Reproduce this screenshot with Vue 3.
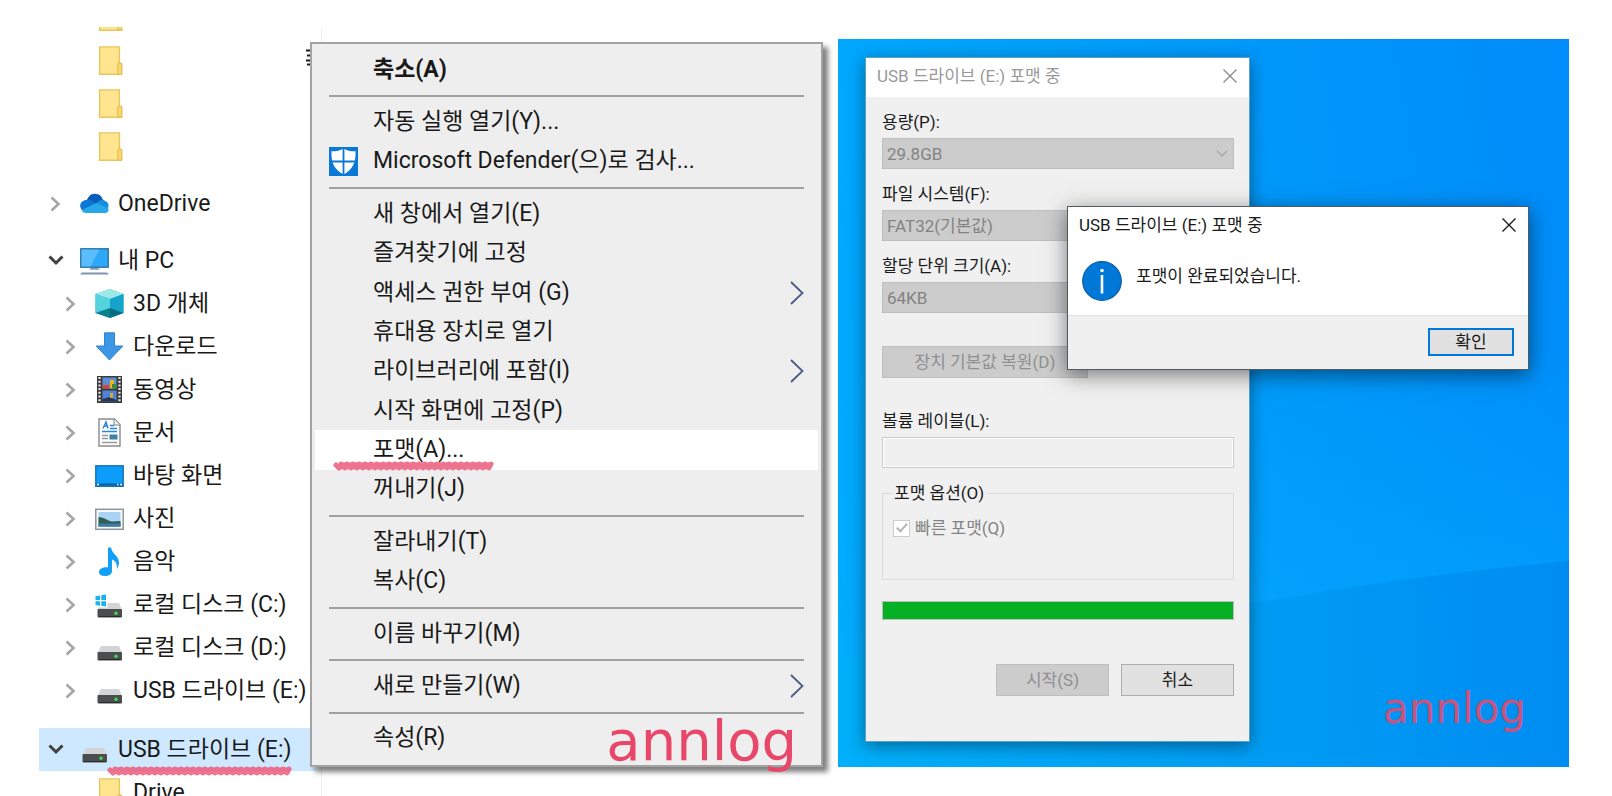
<template>
  <div class="page">
    <!-- 탐색기 -->
    <section class="explorer">
      <nav class="tree">
        <ul class="tree-list">
          <li
            v-for="node in nodes"
            :key="node.id"
            class="tree-row"
            :class="[`level-${node.level}`, { clipped: node.clipped, spaced: node.spaced, selected: node.selected }]"
          >
            <button v-if="node.arrow" class="toggle" :class="node.arrow" :aria-label="node.label">
              <svg v-if="node.arrow === 'open'" width="16" height="11" viewBox="0 0 16 11">
                <path d="M1.5 1.5 8 8l6.5-6.5" fill="none" stroke="#404040" stroke-width="3" />
              </svg>
              <svg v-else width="11" height="16" viewBox="0 0 11 16">
                <path d="M1.5 1.5 8.5 8l-7 6.5" fill="none" stroke="#a6a6a6" stroke-width="2.6" />
              </svg>
            </button>
            <span v-else class="toggle"></span>

            <svg class="node-icon" width="29" height="29" viewBox="0 0 29 29">
              <template v-if="node.icon === 'folder'">
                <path d="M4.600.9h19.800v16.500l1.900.8v10H4.600z" fill="#ffe58f" stroke="#e8c65c" stroke-width="1.4" />
                <path d="M22.900 28V17.800l2-1.200 1.900 1.200V28z" fill="#fbd970" stroke="#e3bd4e" stroke-width="1.2" />
              </template>
              <template v-else-if="node.icon === 'cloud'">
                <path d="M6 15C7 7 12 4 16 5c4 0 6 3 7 6l-8 5z" fill="#0a5cb8" />
                <path d="M6 11c4-1 7 1 10 4L3 22c-5-4-3-10 3-11z" fill="#0d78d4" />
                <path d="M16 15c3-5 8-5 9-3 4 1 4 5 3 7l-9 2z" fill="#1490df" />
                <path d="M2 21 16 14l12 5c2 4-2 5-4 5H6c-2 0-4-1-4-3z" fill="#28a8ea" />
              </template>
              <template v-else-if="node.icon === 'pc'">
                <rect x=".8" y="2.8" width="27.4" height="18.4" fill="#2fa8fa" stroke="#2f6f9f" stroke-width="1.4" />
                <path d="M1.500 3.500h18l-9 17h-9z" fill="#6cc6ff" opacity=".7" />
                <path d="M11 22h7l2 1.800H9z" fill="#7f9bb4" />
                <path d="M2 26.500h25l2 2H0z" fill="#8094ab" />
              </template>
              <template v-else-if="node.icon === 'cube'">
                <path d="M.5 5 15 0l13.500 5v19L15 29 .5 24z" fill="#28b9d4" />
                <path d="M.5 5 15 0l13.500 5L15 10z" fill="#9ce9ea" />
                <path d="M.5 5 15 10v9L.5 24z" fill="#55d3dc" />
                <path d="M15 10 28.500 5v19L15 19z" fill="#16a3cb" />
                <path d="M.5 24 15 19v10z" fill="#0b8289" />
                <path d="M15 19l13.500 5L15 29z" fill="#086b80" />
              </template>
              <path
                v-else-if="node.icon === 'download'"
                d="M9.500.8h10V14h8.300L14.500 28 1.200 14h8.300z"
                fill="#3e97e6"
                stroke="#2f83d2"
              />
              <template v-else-if="node.icon === 'video'">
                <rect x="2" y="1" width="25" height="27" fill="#3a3a3a" />
                <path d="M4.500 2v26M24.500 2v26" stroke="#e8e8e8" stroke-width="2.200" stroke-dasharray="2 1.700" />
                <rect x="7.500" y="2.500" width="14" height="11" fill="#5b8fd8" />
                <rect x="7.500" y="15.500" width="14" height="11" fill="#4f83d6" />
                <path d="M7.500 10h7v3.500h-7z" fill="#d6453c" />
                <path d="M15 5h4v8.500h-4z" fill="#e9b521" />
                <path d="M17 9h4.500v4.500H17z" fill="#3c8b34" />
                <path d="M7.500 24l7-2 7 3v1.500h-14z" fill="#24385c" />
                <path d="M15 18h3v5h-3z" fill="#d9a73a" />
              </template>
              <template v-else-if="node.icon === 'doc'">
                <path d="M4 1h15.500l5.500 5.500V28H4z" fill="#fdfdfd" stroke="#8a8a8a" stroke-width="1.400" />
                <path d="M19 1v6h6" fill="#eee" stroke="#8a8a8a" />
                <path d="M8 10.500 11 4l2 6.500M8.500 8h4M15 7.500h4M15 10.500h7M7 13.500h15" stroke="#2b87d3" stroke-width="1.500" fill="none" />
                <path d="M7 17.500h6M7 20.500h6M7 24.500h15" stroke="#9a9a9a" stroke-width="1.300" />
                <rect x="14.500" y="16.500" width="8" height="5" fill="#3c81ae" />
              </template>
              <template v-else-if="node.icon === 'desktop'">
                <rect x=".8" y="4.800" width="27.400" height="20.500" fill="#0c9dfb" stroke="#1573b8" stroke-width="1.400" />
                <path d="M1.500 23.500h26" stroke="#0b5c9e" stroke-width="2" />
                <path d="M2 23.500h2M22 23.500h1.500M25 23.500h2" stroke="#fff" stroke-width="1.500" />
              </template>
              <template v-else-if="node.icon === 'picture'">
                <rect x=".8" y="5.300" width="27.400" height="20" fill="#fcfcfc" stroke="#8c959b" stroke-width="1.500" />
                <rect x="3.500" y="8" width="22" height="14.500" fill="#a9d3f2" />
                <path d="M3.500 13c6 0 8 4 14 4.500l8-.5v5.500h-22z" fill="#2f5f55" />
                <path d="M3.500 19.500h22v3h-22z" fill="#3e7ca8" />
              </template>
              <path
                v-else-if="node.icon === 'music'"
                d="M13 .5h3c1 7 8 8 8 15 0 3-1 5-2 6.500.4-6-2-8-5-9.500V24c0 3-3 5-7 5s-6-1.500-6-4c0-3 4-5.500 9-4.500z"
                fill="#12a0f6"
              />
              <template v-else>
                <path v-if="node.icon === 'windisk'" d="M.5 6.200 5 5.500V10H.5zM6.300 5.300 11 4.600V10H6.300zM.5 11.200H5v4.500L.5 15zM6.300 11.200H11v5.300l-4.700-.7z" fill="#15b4ee" />
                <path v-if="node.icon === 'windisk'" d="M12.500 13h11.500l3 7H2.500l.8-2.500h9.200z" fill="#d2d4d5" />
                <path v-else d="M6 13h18l3 7H2.500z" fill="#d2d4d5" />
                <rect x="2.500" y="19" width="24.500" height="8.500" rx="1" fill="#4b4d4e" />
                <path d="M4 26.500h21.500" stroke="#2c2c2c" />
                <circle cx="21" cy="23.300" r="1.700" fill="#3ee04a" />
              </template>
            </svg>
            <a v-if="node.label" class="node-label" href="#">{{ node.label }}</a>
          </li>
        </ul>
        <svg class="scribble tree-mark" width="188" height="12" viewBox="0 0 188 12">
          <path :d="scribble(188)" />
        </svg>
      </nav>

      <svg class="ruler" width="6" height="18" viewBox="0 0 6 18">
        <path d="M0 1.500h6M1 6.500h5M0 11.500h6M1 15.500h5" stroke="#1a1a1a" stroke-width="2" />
      </svg>

      <!-- 컨텍스트 메뉴 -->
      <div class="context-menu" role="menu">
        <template v-for="(group, g) in menuGroups" :key="g">
          <div v-if="g > 0" class="menu-separator" role="separator"></div>
          <button
            v-for="item in group"
            :key="item.text"
            class="menu-item"
            :class="{ bold: item.bold, hover: item.hover }"
            role="menuitem"
          >
            <span class="menu-icon">
              <svg v-if="item.shield" width="29" height="29" viewBox="0 0 29 29">
                <rect width="29" height="29" fill="#0a78d7" />
                <path d="M14.500 1.500C11 4 6 4.500 2.500 4.300c-.6 11 2.500 18 12 23.200 9.500-5.200 12.600-12.200 12-23.200C23 4.500 18 4 14.500 1.500z" fill="#fff" />
                <path d="M14.500 1v27M2 14.500h25" stroke="#0a78d7" stroke-width="1.800" />
              </svg>
            </span>
            <span class="menu-text">{{ item.text }}</span>
            <svg v-if="item.sub" width="14" height="24" viewBox="0 0 14 24">
              <path d="M1 1l11.500 11L1 23" fill="none" stroke="#4b5a86" stroke-width="1.800" />
            </svg>
            <svg v-if="item.hover" class="scribble menu-mark" width="163" height="12" viewBox="0 0 163 12">
              <path :d="scribble(163)" />
            </svg>
          </button>
        </template>
        <span class="watermark large">annlog</span>
      </div>
    </section>

    <!-- 바탕 화면 -->
    <section class="desktop">
      <svg class="beam" viewBox="0 0 731 728" preserveAspectRatio="none">
        <defs>
          <linearGradient id="beam-fade" x1="0" y1="0" x2="0" y2="1">
            <stop offset="0" stop-color="#00aaff" stop-opacity="0" />
            <stop offset="1" stop-color="#08acff" stop-opacity=".5" />
          </linearGradient>
          <linearGradient id="floor-fade" x1="0" y1="0" x2="1" y2="0">
            <stop offset="0" stop-color="#00b4f4" stop-opacity=".4" />
            <stop offset=".6" stop-color="#009cee" stop-opacity=".5" />
            <stop offset="1" stop-color="#0088e8" stop-opacity=".5" />
          </linearGradient>
        </defs>
        <path d="M0 340 731 300V522Q560 538 412 565 200 590 0 620z" fill="url(#beam-fade)" />
        <path d="M0 620Q200 590 412 565 560 538 731 522V728H0z" fill="url(#floor-fade)" />
      </svg>

      <form class="window format-window" @submit.prevent>
        <header class="title-bar inactive">
          <span>USB 드라이브 (E:) 포맷 중</span>
          <button type="button" class="close" aria-label="닫기">
            <svg width="14" height="14" viewBox="0 0 14 14"><path d="M.5.5l13 13M13.500.5l-13 13" /></svg>
          </button>
        </header>
        <div class="format-body">
          <div v-for="field in fields" :key="field.id" class="field">
            <label :for="field.id">{{ field.label }}</label>
            <div class="select-wrap">
              <select :id="field.id" disabled>
                <option>{{ field.value }}</option>
              </select>
              <svg class="select-arrow" width="12" height="8" viewBox="0 0 12 8">
                <path d="M1 1l5 5 5-5" fill="none" stroke="#a8a8a8" stroke-width="1.500" />
              </svg>
            </div>
          </div>
          <button type="button" class="btn restore" disabled>장치 기본값 복원(D)</button>
          <div class="field">
            <label for="volume">볼륨 레이블(L):</label>
            <input id="volume" class="volume" type="text" disabled />
          </div>
          <fieldset class="options">
            <legend>포맷 옵션(O)</legend>
            <label class="quick"><input type="checkbox" checked disabled />빠른 포맷(Q)</label>
          </fieldset>
          <progress class="progress" value="100" max="100"></progress>
          <div class="actions">
            <button type="button" class="btn" disabled>시작(S)</button>
            <button type="button" class="btn">취소</button>
          </div>
        </div>
      </form>

      <div class="window message" role="dialog">
        <header class="title-bar">
          <span>USB 드라이브 (E:) 포맷 중</span>
          <button type="button" class="close" aria-label="닫기">
            <svg width="14" height="14" viewBox="0 0 14 14"><path d="M.5.5l13 13M13.500.5l-13 13" /></svg>
          </button>
        </header>
        <div class="message-body">
          <svg width="40" height="40" viewBox="0 0 40 40">
            <circle cx="20" cy="20" r="19.300" fill="#0078d7" stroke="#0a5ca8" stroke-width="1.200" />
            <path d="M20 14v18.500" stroke="#fff" stroke-width="2.600" />
            <circle cx="20" cy="9.500" r="1.800" fill="#fff" />
          </svg>
          <p>포맷이 완료되었습니다.</p>
        </div>
        <footer class="message-footer">
          <button type="button" class="btn primary">확인</button>
        </footer>
      </div>

      <span class="watermark small">annlog</span>
    </section>
  </div>
</template>

<script setup>
// 탐색기 트리
const nodes = [
  { id: 1, level: 1, icon: 'folder', clipped: true },
  { id: 2, level: 1, icon: 'folder' },
  { id: 3, level: 1, icon: 'folder' },
  { id: 4, level: 1, icon: 'folder' },
  { id: 5, level: 0, icon: 'cloud', label: 'OneDrive', arrow: 'closed', spaced: true },
  { id: 6, level: 0, icon: 'pc', label: '내 PC', arrow: 'open', spaced: true },
  { id: 7, level: 1, icon: 'cube', label: '3D 개체', arrow: 'closed' },
  { id: 8, level: 1, icon: 'download', label: '다운로드', arrow: 'closed' },
  { id: 9, level: 1, icon: 'video', label: '동영상', arrow: 'closed' },
  { id: 10, level: 1, icon: 'doc', label: '문서', arrow: 'closed' },
  { id: 11, level: 1, icon: 'desktop', label: '바탕 화면', arrow: 'closed' },
  { id: 12, level: 1, icon: 'picture', label: '사진', arrow: 'closed' },
  { id: 13, level: 1, icon: 'music', label: '음악', arrow: 'closed' },
  { id: 14, level: 1, icon: 'windisk', label: '로컬 디스크 (C:)', arrow: 'closed' },
  { id: 15, level: 1, icon: 'disk', label: '로컬 디스크 (D:)', arrow: 'closed' },
  { id: 16, level: 1, icon: 'disk', label: 'USB 드라이브 (E:)', arrow: 'closed' },
  { id: 17, level: 0, icon: 'disk', label: 'USB 드라이브 (E:)', arrow: 'open', spaced: true, selected: true },
  { id: 18, level: 1, icon: 'folder', label: 'Drive' }
]

// 메뉴 그룹 (그룹 사이에 구분선)
const menuGroups = [
  [{ text: '축소(A)', bold: true }],
  [{ text: '자동 실행 열기(Y)...' }, { text: 'Microsoft Defender(으)로 검사...', shield: true }],
  [
    { text: '새 창에서 열기(E)' },
    { text: '즐겨찾기에 고정' },
    { text: '액세스 권한 부여 (G)', sub: true },
    { text: '휴대용 장치로 열기' },
    { text: '라이브러리에 포함(I)', sub: true },
    { text: '시작 화면에 고정(P)' },
    { text: '포맷(A)...', hover: true },
    { text: '꺼내기(J)' }
  ],
  [{ text: '잘라내기(T)' }, { text: '복사(C)' }],
  [{ text: '이름 바꾸기(M)' }],
  [{ text: '새로 만들기(W)', sub: true }],
  [{ text: '속성(R)' }]
]

const fields = [
  { id: 'capacity', label: '용량(P):', value: '29.8GB' },
  { id: 'fs', label: '파일 시스템(F):', value: 'FAT32(기본값)' },
  { id: 'unit', label: '할당 단위 크기(A):', value: '64KB' }
]

// 손으로 그은 밑줄
const scribble = (width) => {
  let d = 'M3 5'
  for (let x = 6; x < width - 5; x += 3) {
    d += `L${x} ${8 - (x % 2)}L${x + 2} ${4 + (x % 2)}`
  }
  return d
}
</script>

<style>
body {
  margin: 0;
  background: #fff;
}
</style>

<style scoped>
.page {
  display: grid;
  grid-template-columns: 838fr 731fr;
  grid-template-rows: 100vh;
  padding-right: 43px;
  overflow: hidden;
  font-family: Roboto, "Noto Sans CJK KR", sans-serif;
  color: #1a1a1a;
}

button {
  font: inherit;
  color: inherit;
  border: none;
  background: none;
  padding: 0;
}

/* 탐색기 */
.explorer {
  position: relative;
  min-width: 0;
}

.tree {
  position: relative;
  width: 282px;
  margin: 27px 0 0;
  padding-left: 39px;
  border-right: 1px solid #ededed;
}

.tree-list {
  list-style: none;
  margin: 0;
  padding: 0;
}

.tree-row {
  display: flex;
  align-items: center;
  height: 43px;
  margin-right: 5px;
  font-size: 23px;
  line-height: 30px;
  white-space: nowrap;
}

.tree-row.level-1 {
  padding-left: 15px;
}

.tree-row.clipped {
  height: 4px;
  margin-bottom: 8px;
  align-items: flex-end;
  overflow: hidden;
}

.tree-row.spaced {
  margin-top: 14px;
}

.tree-row.selected {
  margin-top: 16px;
  background: #cde8ff;
}

.toggle {
  display: flex;
  justify-content: center;
  width: 33px;
}

.node-icon {
  flex-shrink: 0;
  margin: 0 9px 0 8px;
}

.node-label {
  color: inherit;
  text-decoration: none;
}

.ruler {
  position: absolute;
  left: 306px;
  top: 49px;
}

/* 밑줄 표시 */
.scribble {
  position: absolute;
  fill: none;
  stroke: #ec6482;
  stroke-width: 5;
  stroke-linejoin: round;
  stroke-linecap: round;
  opacity: 0.9;
}

.tree-mark {
  left: 107px;
  top: 738px;
}

.menu-mark {
  left: 18px;
  bottom: -2px;
}

/* 컨텍스트 메뉴 */
.context-menu {
  position: absolute;
  left: 310px;
  right: 15px;
  top: 42px;
  bottom: 29px;
  display: flex;
  flex-direction: column;
  box-sizing: border-box;
  padding: 6px 3px 7px;
  border: 2px solid #a3a3a3;
  background: #eee;
  box-shadow: 5px 5px 5px rgba(0, 0, 0, 0.5);
}

.menu-separator {
  height: 2px;
  margin: 6px 14px 5px;
  background: #a0a0a0;
}

.menu-item {
  position: relative;
  flex: 1;
  display: flex;
  align-items: center;
  padding: 0 14px;
  font-size: 23px;
  line-height: 30px;
  text-align: left;
}

.menu-item.bold {
  font-weight: 700;
}

.menu-item.hover {
  background: #fff;
}

.menu-icon {
  display: flex;
  width: 44px;
}

.menu-text {
  flex: 1;
}

.watermark {
  position: absolute;
  font-family: "DejaVu Sans", sans-serif;
  color: #e8476a;
}

.watermark.large {
  right: 24px;
  bottom: -8px;
  font-size: 56px;
  line-height: 64px;
}

.watermark.small {
  right: 43px;
  bottom: 34px;
  font-size: 42px;
  line-height: 48px;
  color: #c9527f;
}

/* 바탕 화면 */
.desktop {
  position: relative;
  margin: 39px 0 29px;
  background: linear-gradient(80deg, #00acff 0%, #009cfa 50%, #008cfa 100%);
  font-size: 17px;
  line-height: 22px;
}

.beam {
  position: absolute;
  width: 100%;
  height: 100%;
}

.window {
  position: absolute;
  box-sizing: border-box;
}

.format-window {
  left: 27px;
  top: 18px;
  width: 385px;
  border: 1px solid #5e9fc4;
  background: #f0f0f0;
  box-shadow: 0 4px 16px rgba(0, 0, 0, 0.4);
}

.title-bar {
  display: flex;
  align-items: center;
  justify-content: space-between;
  height: 36px;
  padding: 0 12px 3px 11px;
  background: #fff;
}

.title-bar.inactive {
  color: #999;
}

.close {
  display: flex;
}

.close path {
  fill: none;
  stroke: #1a1a1a;
  stroke-width: 1.4;
}

.inactive .close path {
  stroke: #8c8c8c;
}

.format-body {
  padding: 14px 15px 45px 16px;
}

.field {
  display: flex;
  flex-direction: column;
  gap: 5px;
}

.field + .field {
  margin-top: 14px;
}

.select-wrap {
  position: relative;
  display: flex;
}

select,
.volume {
  appearance: none;
  box-sizing: border-box;
  width: 100%;
  height: 31px;
  padding: 0 4px;
  border: 1px solid #bfbfbf;
  border-radius: 0;
  background: #ccc;
  font: inherit;
  color: #838383;
  opacity: 1;
}

.volume {
  border-color: #ccc;
  background: #f0f0f0;
  box-shadow: inset 0 0 0 1px #fff;
}

.select-arrow {
  position: absolute;
  right: 6px;
  top: 12px;
}

.btn {
  box-sizing: border-box;
  width: 113px;
  height: 32px;
  border: 1px solid #adadad;
  background: #e1e1e1;
}

.btn:disabled {
  border-color: #bfbfbf;
  background: #ccc;
  color: #909090;
}

.btn.restore {
  display: block;
  width: 206px;
  margin: 33px 0 32px;
}

.options {
  height: 98px;
  box-sizing: border-box;
  margin: 14px 0 0;
  padding: 13px 10px 0;
  border: 1px solid #dcdcdc;
}

.options legend {
  padding: 0 4px 0 2px;
  margin-left: -1px;
}

.quick {
  display: flex;
  align-items: center;
  gap: 5px;
  color: #838383;
}

.quick input {
  appearance: none;
  display: flex;
  justify-content: center;
  width: 17px;
  height: 17px;
  margin: 0;
  border: 1px solid #ccc;
  box-sizing: border-box;
  background: #fff;
}

.quick input::after {
  content: "";
  width: 4px;
  height: 9px;
  border: solid #b5b5b5;
  border-width: 0 2px 2px 0;
  transform: rotate(42deg);
}

.progress {
  appearance: none;
  display: block;
  box-sizing: border-box;
  width: 100%;
  height: 19px;
  margin-top: 21px;
  border: 1px solid #bcbcbc;
}

.progress::-webkit-progress-bar {
  background: #e6e6e6;
}

.progress::-webkit-progress-value {
  background: #06b025;
}

.actions {
  display: flex;
  justify-content: flex-end;
  gap: 12px;
  margin-top: 44px;
}

/* 완료 메시지 */
.message {
  left: 229px;
  top: 167px;
  width: 462px;
  border: 1px solid #4f5a61;
  background: #fff;
  box-shadow: 0 5px 20px rgba(0, 0, 0, 0.5);
}

.message-body {
  display: flex;
  gap: 14px;
  height: 54px;
  padding: 15px 14px 0;
}

.message-body p {
  margin: 4px 0 0;
}

.message-footer {
  display: flex;
  justify-content: flex-end;
  padding: 12px 14px 13px;
  border-top: 1px solid #dfdfdf;
  background: #f0f0f0;
}

.btn.primary {
  width: 86px;
  height: 28px;
  border: 2px solid #0078d7;
}
</style>
